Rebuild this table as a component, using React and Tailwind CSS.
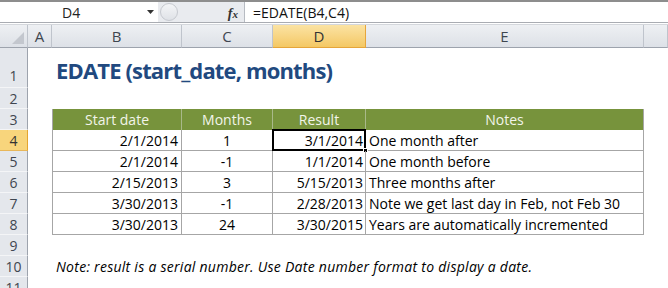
import React from 'react';

// column widths in px: row header, A, B, C, D, E, F
const COLS = [28, 24, 130, 91, 93, 278, 24];

const ROWS = [
  { start: '2/1/2014', months: '1', result: '3/1/2014', notes: 'One month after' },
  { start: '2/1/2014', months: '-1', result: '1/1/2014', notes: 'One month before' },
  { start: '2/15/2013', months: '3', result: '5/15/2013', notes: 'Three months after' },
  { start: '3/30/2013', months: '-1', result: '2/28/2013', notes: 'Note we get last day in Feb, not Feb 30' },
  { start: '3/30/2013', months: '24', result: '3/30/2015', notes: 'Years are automatically incremented' },
];

const FONT = { fontFamily: '"Open Sans", "Liberation Sans", sans-serif' };

const RowHead = ({ n, active, tall }) => (
  <div
    className={`w-[28px] shrink-0 flex justify-center border-r border-b text-[14px] ${
      tall ? 'h-[40px] items-end pb-[1px]' : 'h-[21px] items-center'
    } ${
      active
        ? 'bg-[#f8d57c] border-r-[#e4a530] border-b-[#e8b75a] text-[#333]'
        : 'bg-[#e4e7ec] border-r-[#9da3ad] border-b-[#f4f5f7] text-[#3f4650]'
    }`}
  >
    {n}
  </div>
);

const FormulaBar = () => (
  <div className="h-[23px] flex border-t-2 border-t-[#8d8d8d] border-b border-b-[#a9acb2] bg-white">
    <div className="w-[158px] flex items-center relative">
      <span className="ml-[62px] text-[14px] text-[#222]">D4</span>
      <svg className="absolute left-[147px] top-[8px]" width="7" height="4" viewBox="0 0 7 4">
        <path d="M0 0 H7 L3.5 4 Z" fill="#333" />
      </svg>
    </div>
    <div className="w-[86px] bg-[#e9ebef] flex items-center relative">
      <div className="ml-[2px] w-[18px] h-[18px] rounded-full border border-[#c6c9cf] bg-gradient-to-b from-[#f4f5f7] to-[#dfe2e7]" />
      <span
        className="absolute right-[6px] top-[1px] text-[14px] italic font-bold text-[#333]"
        style={{ fontFamily: '"Liberation Serif", serif' }}
      >
        f<span className="text-[11px]">x</span>
      </span>
    </div>
    <div className="w-[1px] bg-[#b7bbc2]" />
    <div className="flex-1 flex items-center pl-[8px] text-[14px] text-[#111]">=EDATE(B4,C4)</div>
  </div>
);

const ColumnHeaders = () => {
  const labels = ['', 'A', 'B', 'C', 'D', 'E', ''];
  return (
    <div className="flex h-[24px] mt-[1px] border-t border-t-[#d4d7dc]">
      {labels.map((l, i) => {
        const active = l === 'D';
        return (
          <div
            key={i}
            style={{ width: COLS[i] }}
            className={`shrink-0 flex items-center justify-center text-[15px] border-b border-r relative ${
              active
                ? 'bg-gradient-to-b from-[#fbe3a3] to-[#f4c863] border-b-[#e5a53a] border-r-[#e6a63c] text-[#333]'
                : 'bg-gradient-to-b from-[#eef0f3] to-[#dde1e7] border-b-[#9da3ad] border-r-[#bfc4cc] text-[#3f4650]'
            } ${i === 6 ? 'flex-1' : ''}`}
          >
            {i === 0 ? (
              <svg className="absolute right-[3px] bottom-[3px]" width="12" height="12" viewBox="0 0 12 12">
                <path d="M12 0 V12 H0 Z" fill="#c3c7ce" />
              </svg>
            ) : (
              l
            )}
          </div>
        );
      })}
    </div>
  );
};

const Cell = ({ i, className = '', children }) => (
  <div style={{ width: COLS[i] }} className={`shrink-0 h-full flex items-center ${className}`}>
    {children}
  </div>
);

export default function App() {
  return (
    <div className="w-[668px] h-[288px] overflow-hidden bg-white" style={FONT}>
      <FormulaBar />
      <ColumnHeaders />

      {/* row 1 - title */}
      <div className="flex h-[40px]">
        <RowHead n={1} tall />
        <Cell i={1} />
        <div className="flex items-end pb-[1px] pl-[4px] whitespace-nowrap">
          <span className="text-[22px] font-bold text-[#21497f] tracking-[-0.85px]">EDATE (start_date, months)</span>
        </div>
      </div>

      {/* row 2 */}
      <div className="flex h-[21px]">
        <RowHead n={2} />
      </div>

      {/* row 3 - table header */}
      <div className="flex h-[21px]">
        <RowHead n={3} />
        <Cell i={1} />
        <Cell i={2} className="justify-center bg-[#77933c] text-[#f2f5ea] text-[14px] border-l border-l-[#a6a6a6] border-r border-r-[#a9b98a]">
          Start date
        </Cell>
        <Cell i={3} className="justify-center bg-[#77933c] text-[#f2f5ea] text-[14px] border-r border-r-[#a9b98a]">
          Months
        </Cell>
        <Cell i={4} className="justify-center bg-[#77933c] text-[#f2f5ea] text-[14px] border-r border-r-[#a9b98a]">
          Result
        </Cell>
        <Cell i={5} className="justify-center bg-[#77933c] text-[#f2f5ea] text-[14px] border-r border-r-[#a6a6a6]">
          Notes
        </Cell>
      </div>

      {/* rows 4-8 - data */}
      {ROWS.map((r, idx) => (
        <div key={idx} className="flex h-[21px] text-[14px] text-black">
          <RowHead n={idx + 4} active={idx === 0} />
          <Cell i={1} />
          <Cell i={2} className="justify-end pr-[3px] border-l border-r border-b border-[#a6a6a6]">
            {r.start}
          </Cell>
          <Cell i={3} className="justify-center border-r border-b border-[#a6a6a6]">
            {r.months}
          </Cell>
          <Cell i={4} className="justify-end pr-[2px] border-r border-b border-[#a6a6a6] relative">
            {r.result}
            {idx === 0 && (
              <>
                <div className="absolute -left-[1px] -top-[1px] -right-[1px] -bottom-[1px] border-2 border-black" />
                <div className="absolute -right-[3px] -bottom-[3px] w-[5px] h-[5px] bg-black border border-white" />
              </>
            )}
          </Cell>
          <Cell i={5} className="pl-[3px] border-r border-b border-[#a6a6a6] whitespace-nowrap">
            {r.notes}
          </Cell>
        </div>
      ))}

      {/* row 9 */}
      <div className="flex h-[21px]">
        <RowHead n={9} />
      </div>

      {/* row 10 - note */}
      <div className="flex h-[21px]">
        <RowHead n={10} />
        <Cell i={1} />
        <div className="flex items-center pl-[4px] text-[14px] italic tracking-[0.27px] text-black whitespace-nowrap">
          Note: result is a serial number. Use Date number format to display a date.
        </div>
      </div>

      {/* row 11 */}
      <div className="flex h-[21px]">
        <RowHead n={11} />
      </div>
    </div>
  );
}
